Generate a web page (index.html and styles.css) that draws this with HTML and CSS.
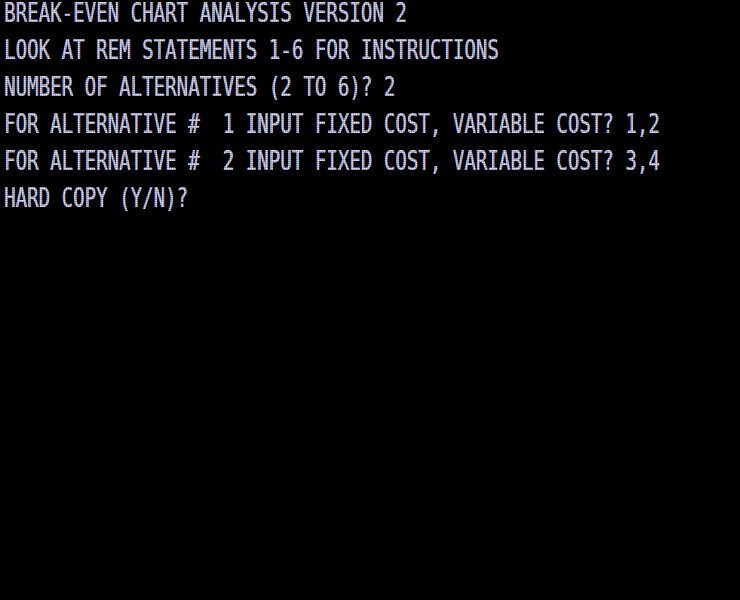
FILE: index.html
```html
<!DOCTYPE html>
<html>
<head>
<meta charset="utf-8">
<link rel="stylesheet" href="styles.css">
</head>
<body>
<div class="screen">
  <div class="line"><span class="txt">BREAK-EVEN CHART ANALYSIS VERSION 2</span></div>
  <div class="line"><span class="txt">LOOK AT REM STATEMENTS 1-6 FOR INSTRUCTIONS</span></div>
  <div class="line"><span class="txt">NUMBER OF ALTERNATIVES (2 TO 6)? 2</span></div>
  <div class="line"><span class="txt">FOR ALTERNATIVE #  1 INPUT FIXED COST, VARIABLE COST? 1,2</span></div>
  <div class="line"><span class="txt">FOR ALTERNATIVE #  2 INPUT FIXED COST, VARIABLE COST? 3,4</span></div>
  <div class="line"><span class="txt">HARD COPY (Y/N)?</span></div>
  <div class="scan"></div>
</div>
</body>
</html>
```
FILE: styles.css
```css
html, body {
  margin: 0;
  padding: 0;
  background: #000;
}
.screen {
  position: relative;
  width: 740px;
  height: 600px;
  overflow: hidden;
  background: #000;
  display: flex;
  flex-direction: column;
  gap: 7px;
  padding-left: 4px;
  box-sizing: border-box;
}
.line {
  height: 30px;
  white-space: pre;
}
.txt {
  display: inline-block;
  font-family: "DejaVu Sans Mono", monospace;
  font-size: 26px;
  line-height: 30px;
  color: #dcdcff;
  text-shadow: 0.4px 0 0 #dcdcff;
  transform: translateY(-2.5px) scaleX(0.735);
  transform-origin: left top;
}
.scan {
  position: absolute;
  inset: 0;
  pointer-events: none;
  background:
    repeating-linear-gradient(to bottom, rgba(0,0,0,0) 0 1px, rgba(0,0,0,0.2) 1px 2px),
    repeating-linear-gradient(to right, rgba(0,0,0,0) 0 1px, rgba(0,0,0,0.15) 1px 2px);
}
```
